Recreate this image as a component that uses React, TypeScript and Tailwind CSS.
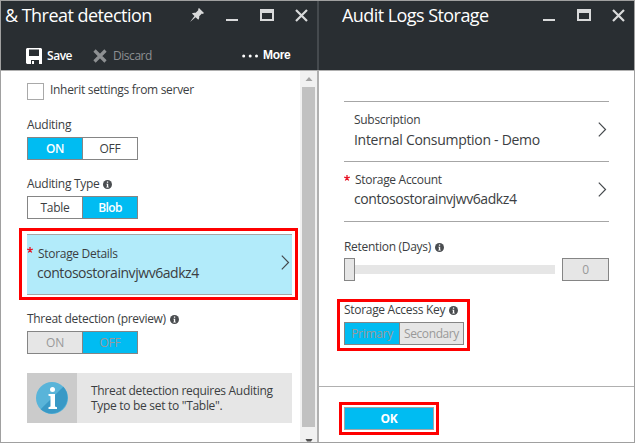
import type { ReactNode } from 'react';

function Minimize() {
  return <svg width="12" height="13" viewBox="0 0 12 13" shapeRendering="crispEdges"><path d="M0 10h12v2H0z" fill="#d9dadb" /></svg>;
}

function Maximize() {
  return <svg width="14" height="13" viewBox="0 0 14 13" shapeRendering="crispEdges"><path fillRule="evenodd" d="M0 0h14v12H0zM2 4v6h10V4z" fill="#d9dadb" /></svg>;
}

function Close() {
  return <svg width="13" height="13" viewBox="0 0 13 13"><path d="M1 1l11 11M12 1L1 12" stroke="#d9dadb" strokeWidth="2.200" fill="none" /></svg>;
}

function Pin() {
  return (
    <svg width="14" height="14" viewBox="0 0 14 14">
      <path d="M9 0l5 5-1.200.9-.9-.3-2.700 2.700c.2 1.400-.1 2.600-.9 3.500L5.600 9.200 0 14l4.500-5.900L1.900 5.600c.9-.9 2.300-1.100 3.800-.8l2.700-2.700L8.100.9z" fill="#d9dadb" />
    </svg>
  );
}

function Chevron() {
  return <svg width="9" height="15" viewBox="0 0 9 15" className="shrink-0"><path d="M.8.7l6.700 6.800-6.700 6.800" stroke="#45494d" strokeWidth="1.200" fill="none" /></svg>;
}

function InfoDot() {
  return (
    <svg width="9" height="9" viewBox="0 0 9 9" className="shrink-0">
      <circle cx="4.500" cy="4.500" r="4.500" fill="#4a4d50" />
      <path d="M3.900 1.600h1.300v1.200H3.900zM3.400 3.700h1.800v3h.6v.8H3.300v-.8h.6V4.500h-.5z" fill="#fff" />
    </svg>
  );
}

function Star() {
  return (
    <svg width="6" height="6" viewBox="0 0 6 6" className="shrink-0">
      <path d="M3 0v3M3 3L.2 2.100M3 3l2.800-.9M3 3L1.300 5.500M3 3l1.700 2.500" stroke="#e81123" strokeWidth="1.300" />
    </svg>
  );
}

function Label({ children, info }: { children: ReactNode; info?: boolean }) {
  return (
    <div className="flex h-4 items-center gap-1 whitespace-nowrap text-[12px] leading-4">
      {children}
      {info && <InfoDot />}
    </div>
  );
}

function WindowIcons() {
  return (
    <div className="mt-2 flex h-[13px] shrink-0 items-start gap-[22px]">
      <Minimize />
      <Maximize />
      <div className="-ml-px"><Close /></div>
    </div>
  );
}

function AuditingPanel() {
  return (
    <section className="flex w-[316px] shrink-0 flex-col">
      <header className="h-[69px] shrink-0 bg-[#292e32] text-white">
        <div className="flex h-[38px] items-start pl-1">
          <h1 className="w-[185px] whitespace-nowrap pt-px text-[18px] leading-[26px] tracking-[-0.54px]">&amp; Threat detection</h1>
          <div className="mt-[7px] mr-[22px]"><Pin /></div>
          <WindowIcons />
        </div>
        <div className="flex h-[34px] items-center pl-[25px] text-[12px] leading-4">
          <svg width="16" height="16" viewBox="0 0 16 16" className="mr-[5px]">
            <path fillRule="evenodd" d="M1 0h14l1 1v15h-3v-4H5v4H1l-1-1V1zM3 1.500V8h10V1.500z" fill="#fff" />
            <path d="M6 13h2v3H6z" fill="#fff" />
          </svg>
          <span className="w-[46px] font-semibold tracking-[-0.45px]">Save</span>
          <svg width="14" height="14" viewBox="0 0 14 14" className="mr-[6px]">
            <path d="M1.500 1.500l11 11M12.500 1.500l-11 11" stroke="#8d9092" strokeWidth="3.200" />
          </svg>
          <span className="w-[129px] text-[#8d9092] tracking-[-0.45px]">Discard</span>
          <svg width="16" height="4" viewBox="0 0 16 4" className="mr-[5px]">
            <circle cx="1.700" cy="2" r="1.500" fill="#fff" /><circle cx="8.200" cy="2" r="1.500" fill="#fff" /><circle cx="14.500" cy="2" r="1.500" fill="#fff" />
          </svg>
          <span className="-mt-[3px] font-['Liberation_Sans',sans-serif] font-bold tracking-[-0.35px]">More</span>
        </div>
      </header>
      <div className="flex h-[372px] border-t border-[#b0b0b0]">
        <div className="w-[299px] pl-[18px]">
          <div className="flex h-[41px] items-start pl-2 pt-3">
            <div className="mr-[6px] h-[17px] w-[17px] border border-[#a9a9a9]" />
            <div className="-mt-[1px]"><Label><span>Inherit settings from server</span></Label></div>
          </div>
          <div className="pl-2 pt-[5px]"><Label><span>Auditing</span></Label></div>
          <div className="ml-2 mt-1 flex h-[23px] w-[111px] border border-[#858585] text-center text-[12px] leading-[21px]">
            <div className="w-[54px] bg-[#00bcf2] font-semibold text-white">ON</div>
            <div className="flex-1 border-l border-[#858585]">OFF</div>
          </div>
          <div className="pl-2 pt-4"><Label info><span>Auditing Type</span></Label></div>
          <div className="ml-2 mt-1 flex h-[23px] w-[111px] border border-[#858585] text-center text-[12px] leading-[21px]">
            <div className="w-[54px]">Table</div>
            <div className="flex-1 border-l border-[#858585] bg-[#00bcf2] font-semibold tracking-[-0.6px] text-white">Blob</div>
          </div>
          <div className="mt-[9px] h-[72px] w-[279px] border-[3px] border-[#fe0000] pl-[5px] pt-[3px]">
            <div className="flex h-[61px] w-[265px] items-center border-y border-[#a6a6a6] bg-[#b2ebfa]">
              <div className="-mt-[29px] mr-1"><Star /></div>
              <div className="-mt-px w-[244px]">
                <Label><span className="pl-px">Storage Details</span></Label>
                <div className="mt-px h-5 whitespace-nowrap text-[14px] leading-5 tracking-[-0.45px]">contosostorainvjwv6adkz4</div>
              </div>
              <div className="-mt-[5px]"><Chevron /></div>
            </div>
          </div>
          <div className="pl-2 pt-[11px]"><Label info><span>Threat detection (preview)</span></Label></div>
          <div className="ml-2 mt-1 flex h-[23px] w-[111px] border border-[#858585] text-center text-[12px] leading-[21px] text-[#999]">
            <div className="w-[54px] bg-[#e6e6e6]">ON</div>
            <div className="flex-1 border-l border-[#858585] bg-[#00bcf2]">OFF</div>
          </div>
          <div className="ml-2 mt-[19px] flex h-[50px] w-[265px] bg-[#e6e6e6]">
            <div className="flex w-[50px] items-center justify-center bg-[#cbcbcb]">
              <svg width="32" height="32" viewBox="0 0 32 32">
                <circle cx="16" cy="16" r="16" fill="#59b4d9" />
                <path d="M27.300 4.700A16 16 0 0 1 4.700 27.300z" fill="#3999c6" />
                <circle cx="16.500" cy="7.500" r="2.500" fill="#fff" />
                <path d="M12.500 12h6.500v12.500l2 .8v1.700h-8.500v-1.700l2-.8V14.300l-2-.6z" fill="#fff" />
              </svg>
            </div>
            <p className="whitespace-nowrap pl-[14px] pt-[10px] text-[12px] leading-[15px]">
              Threat detection requires Auditing<br />Type to be set to "Table".
            </p>
          </div>
        </div>
        <div className="flex w-[17px] flex-col items-center bg-[#f1f1f1]">
          <svg width="8" height="16" viewBox="0 0 8 16"><path d="M.5 10L4 6l3.500 4z" fill="#a3a3a3" /></svg>
          <div className="h-[340px] w-[13px] bg-[#c1c1c1]" />
          <svg width="8" height="15" viewBox="0 0 8 15"><path d="M.5 12h7L6 14.500H2z" fill="#505050" /></svg>
        </div>
      </div>
    </section>
  );
}

function PickerRow({ label, value, required }: { label: string; value: string; required?: boolean }) {
  return (
    <div className="flex h-[60px] items-center border-b border-[#a6a6a6]">
      <div className="-mt-[27px] w-[10px]">{required && <Star />}</div>
      <div className="-mt-px w-[244px]">
        <Label><span className={required ? 'pl-px' : ''}>{label}</span></Label>
        <div className={`h-5 whitespace-nowrap text-[14px] leading-5 ${required ? 'mt-px mb-px tracking-[-0.42px]' : 'mt-[2px] tracking-[-0.3px]'}`}>{value}</div>
      </div>
      <div className="-mt-[5px]"><Chevron /></div>
    </div>
  );
}

function StoragePanel() {
  return (
    <section className="flex w-[315px] shrink-0 flex-col">
      <header className="flex h-[69px] shrink-0 items-start bg-[#292e32] pl-[23px] text-white">
        <h1 className="w-[201px] whitespace-nowrap pt-px text-[18px] leading-[26px] tracking-[-0.56px]">Audit Logs Storage</h1>
        <WindowIcons />
      </header>
      <div className="border-t border-[#b0b0b0]">
        <div className="h-[316px] border-b border-[#b0b0b0] pl-[25px] pt-[30px]">
          <div className="w-[265px] border-t border-[#a6a6a6]">
            <PickerRow label="Subscription" value="Internal Consumption - Demo" />
            <PickerRow label="Storage Account" value="contosostorainvjwv6adkz4" required />
          </div>
          <div className="pt-[17px]"><Label info><span>Retention (Days)</span></Label></div>
          <div className="mt-[3px] flex w-[265px] items-center">
            <div className="h-[23px] w-[11px] border border-[#858585] bg-[#e6e6e6]" />
            <div className="mr-[7px] h-[9px] w-[200px] bg-[#e6e6e6]" />
            <div className="h-[23px] w-[47px] border border-[#858585] bg-[#e6e6e6] text-center text-[12px] leading-[21px] text-[#999]">0</div>
          </div>
          <div className="-ml-[7px] mt-[18px] h-[52px] w-[133px] border-[3px] border-[#fe0000] pl-1">
            <Label info><span>Storage Access Key</span></Label>
            <div className="mt-1 flex h-[23px] w-[120px] border border-[#858585] text-center text-[12px] leading-[21px] text-[#999]">
              <div className="w-[54px] bg-[#00bcf2]">Primary</div>
              <div className="flex-1 border-l border-[#858585] bg-[#e6e6e6] tracking-[-0.4px]">Secondary</div>
            </div>
          </div>
        </div>
        <div className="pl-5 pt-[15px]">
          <div className="h-[33px] w-[100px] border-[3px] border-[#fe0000] p-[2px]">
            <div className="h-[23px] w-[90px] border border-[#a6a6a6] bg-[#00bcf2] text-center text-[12px] font-bold leading-[21px] text-white">OK</div>
          </div>
        </div>
      </div>
    </section>
  );
}

export default function App() {
  return (
    <main className="flex h-[443px] w-[635px] overflow-hidden border border-[#a0a0a0] bg-white font-['Open_Sans',sans-serif] tracking-[-0.3px] text-[#3b3e42]">
      <AuditingPanel />
      <div className="w-[2px] shrink-0">
        <div className="h-[69px] bg-[#454a4e]" />
        <div className="h-[372px] bg-[#b0b0b0]" />
      </div>
      <StoragePanel />
    </main>
  );
}
